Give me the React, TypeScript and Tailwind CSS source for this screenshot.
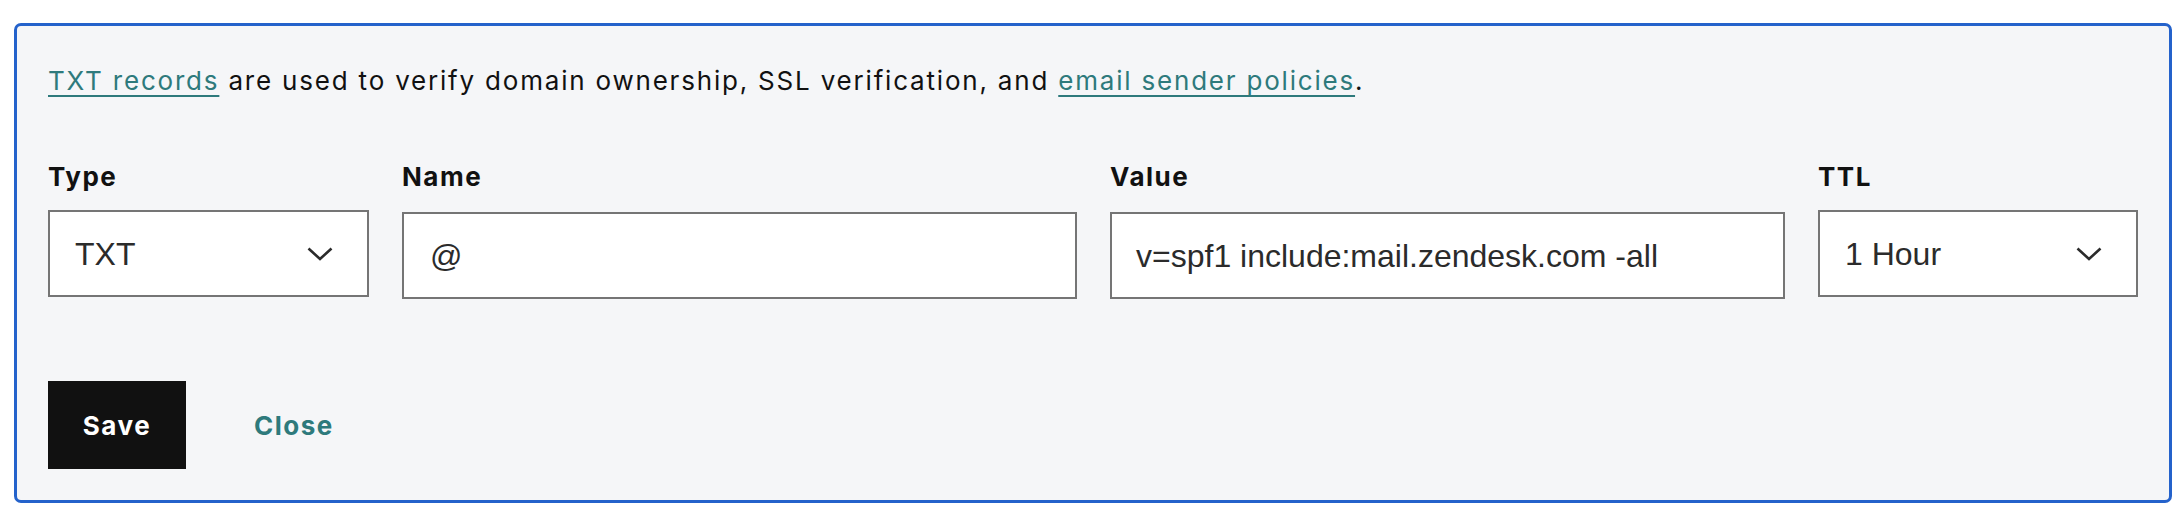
import React from "react";

function Chevron() {
  return (
    <svg width="26" height="14" viewBox="0 0 26 14" fill="none" className="shrink-0">
      <path d="M1.5 1.5 L13 12 L24.5 1.5" stroke="#2b2b2b" strokeWidth="2.6" strokeLinecap="butt" strokeLinejoin="miter" />
    </svg>
  );
}

const inputText = "text-[32px] text-[#2b2b2b] font-['Liberation_Sans',Arial,sans-serif]";

export default function App() {
  return (
    <div className="bg-white w-[2184px] h-[520px] pt-[23px] pl-[14px] pr-[12px] font-['Inter','Noto_Sans',sans-serif]">
      <div className="border-[3px] border-[#2462cb] rounded-[7px] bg-[#f5f6f8] px-[31px] pt-[37px] pb-[31px] text-[#111111]">
        <p className="text-[26px] leading-[36px] tracking-[1.8px]">
          <a className="text-[#2e7a7c] underline underline-offset-[5px] decoration-[2px]">TXT records</a> are used to verify domain ownership, SSL verification, and{" "}
          <a className="text-[#2e7a7c] underline underline-offset-[5px] decoration-[2px]">email sender policies</a>.
        </p>
        <div className="flex gap-[33px] mt-[60px]">
          <div className="w-[321px] flex flex-col gap-[15px]">
            <div className="text-[26px] leading-[36px] font-bold tracking-[1.5px]">Type</div>
            <div className="h-[87px] border-2 border-[#757575] bg-white flex items-center justify-between pl-[25px] pr-[34px]">
              <span className={inputText}>TXT</span>
              <Chevron />
            </div>
          </div>
          <div className="flex-1 flex flex-col gap-[15px]">
            <div className="text-[26px] leading-[36px] font-bold tracking-[1.5px]">Name</div>
            <div className="h-[87px] mt-[2px] border-2 border-[#757575] bg-white flex items-center pl-[26px]">
              <span className={inputText}>@</span>
            </div>
          </div>
          <div className="flex-1 flex flex-col gap-[15px]">
            <div className="text-[26px] leading-[36px] font-bold tracking-[1.5px]">Value</div>
            <div className="h-[87px] mt-[2px] border-2 border-[#757575] bg-white flex items-center pl-[24px]">
              <span className={inputText}>v=spf1 include:mail.zendesk.com -all</span>
            </div>
          </div>
          <div className="w-[320px] flex flex-col gap-[15px]">
            <div className="text-[26px] leading-[36px] font-bold tracking-[1.5px]">TTL</div>
            <div className="h-[87px] border-2 border-[#757575] bg-white flex items-center justify-between pl-[25px] pr-[34px]">
              <span className={inputText}>1 Hour</span>
              <Chevron />
            </div>
          </div>
        </div>
        <div className="flex items-center mt-[82px]">
          <button className="w-[138px] h-[88px] bg-[#111111] text-white text-[26px] font-bold tracking-[1.5px]">Save</button>
          <button className="ml-[68px] text-[#2e7a7c] text-[26px] font-bold tracking-[1.5px]">Close</button>
        </div>
      </div>
    </div>
  );
}
